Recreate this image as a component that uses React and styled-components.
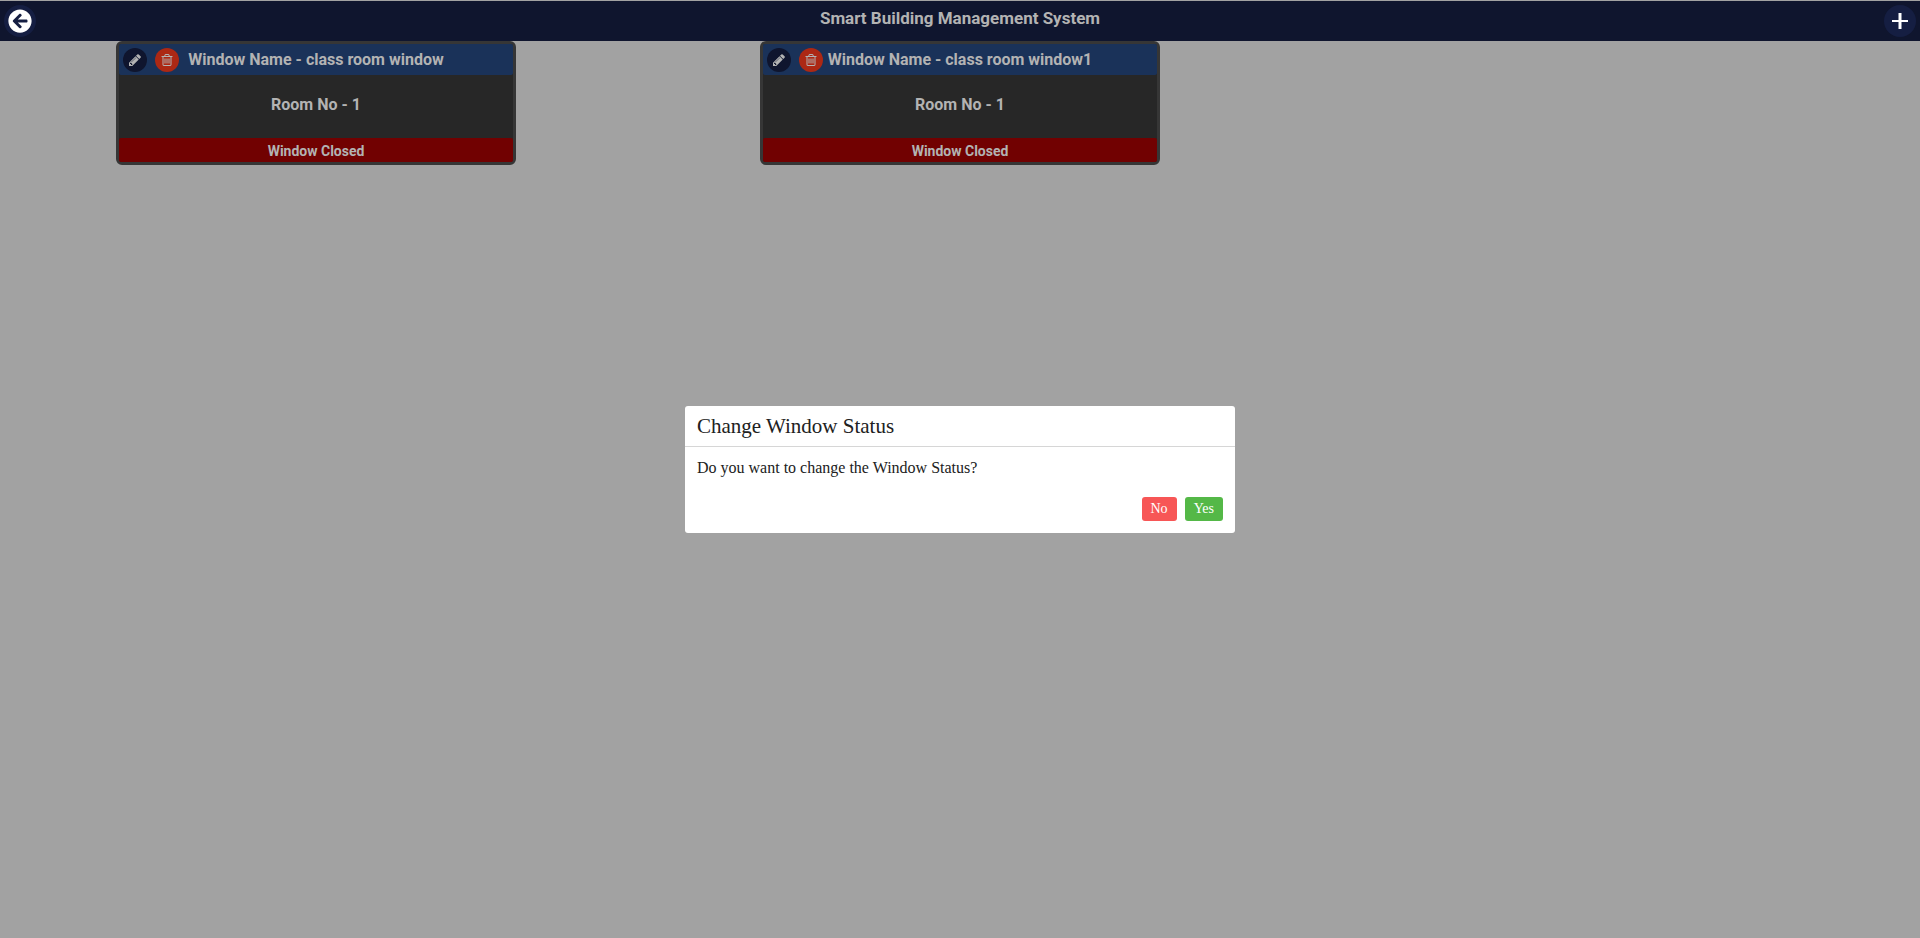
import React from "react";
import styled, { createGlobalStyle } from "styled-components";
import { FaArrowCircleLeft } from "react-icons/fa";

const GlobalStyle = createGlobalStyle`
  * { box-sizing: border-box; }
  body {
    margin: 0;
    background: #a2a2a2;
    font-family: "Liberation Serif", "Times New Roman", serif;
    color: #212121;
    overflow-x: hidden;
  }
  h1, h2, p { margin: 0; }
`;

const sans = `Roboto, "Liberation Sans", Arial, sans-serif`;

const Page = styled.div`
  min-height: 100vh;
  overflow: hidden;
`;

const TopBar = styled.header`
  display: flex;
  align-items: center;
  justify-content: space-between;
  height: 41px;
  padding: 0 4px;
  border-top: 1px solid #a2a2a2;
  background: #0f152e;
`;

const AppTitle = styled.h1`
  padding-bottom: 6px;
  font: bold 17px/24px ${sans};
  color: #b3b3b3;
`;

const RoundButton = styled.button`
  display: flex;
  align-items: center;
  justify-content: center;
  width: ${(p) => p.$size}px;
  height: ${(p) => p.$size}px;
  padding: 0;
  border: 0;
  border-radius: 50%;
  background: ${(p) => p.$bg};
  color: ${(p) => p.$fg};
  cursor: pointer;
`;

const CardGrid = styled.main`
  display: grid;
  grid-template-columns: repeat(3, 1fr);
  justify-items: center;
  margin: 0 -6px;
`;

const Card = styled.article`
  width: 400px;
  border: 3px solid #363636;
  border-radius: 6px;
  background: #272727;
  color: #b3b3b3;
  font-family: ${sans};
  font-weight: bold;
  text-align: center;
`;

const CardHeader = styled.div`
  display: grid;
  align-items: center;
  height: 31px;
  padding: 0 4px;
  border-radius: 2px;
  background: #1a3259;

  > * {
    grid-area: 1 / 1;
  }
`;

const CardActions = styled.div`
  display: flex;
  gap: 8px;
`;

const CardTitle = styled.h2`
  font-size: 16px;
  line-height: 24px;
`;

const RoomLabel = styled.p`
  padding: 18px 0 21px;
  font-size: 16px;
  line-height: 24px;
`;

const StatusBar = styled.button`
  display: block;
  width: 100%;
  height: 24px;
  padding: 1px 0 0;
  border: 0;
  border-radius: 2px;
  background: #710101;
  color: inherit;
  font: bold 14px/22px ${sans};
  cursor: pointer;
`;

const Overlay = styled.div`
  position: fixed;
  inset: 0;
  display: flex;
  align-items: center;
  justify-content: center;
`;

const Dialog = styled.section`
  width: 550px;
  border-radius: 3px;
  background: #fff;
`;

const DialogTitle = styled.h2`
  padding: 8px 12px;
  border-bottom: 1px solid #d6d6d6;
  font-weight: normal;
  font-size: 21px;
  line-height: 24px;
`;

const DialogText = styled.p`
  padding: 12px 12px 0;
  font-size: 16px;
  line-height: 18px;
`;

const DialogActions = styled.div`
  display: flex;
  justify-content: flex-end;
  gap: 8px;
  padding: 20px 12px 12px;
`;

const DialogButton = styled.button`
  height: 24px;
  padding: 0 9px;
  border: 0;
  border-radius: 3px;
  background: ${(p) => p.$bg};
  color: #fff;
  font: 500 14px/20px "Liberation Serif", serif;
  cursor: pointer;
`;

const windows = [
  { name: "class room window", room: 1 },
  { name: "class room window1", room: 1 },
];

function PencilIcon() {
  return (
    <svg width="14" height="14" viewBox="0 0 1792 1792" fill="currentColor">
      <path d="M491 1536l91-91-235-235-91 91v107h128v128h107zm523-928q0-22-22-22-10 0-17 7l-542 542q-7 7-7 17 0 22 22 22 10 0 17-7l542-542q7-7 7-17zm-54-192l416 416-832 832h-416v-416zm683 96q0 53-37 90l-166 166-416-416 166-165q36-38 90-38 53 0 91 38l235 234q37 39 37 91z" />
    </svg>
  );
}

function TrashIcon() {
  return (
    <svg width="14" height="14" viewBox="0 0 1792 1792" fill="currentColor">
      <path d="M704 736v576q0 14-9 23t-23 9h-64q-14 0-23-9t-9-23v-576q0-14 9-23t23-9h64q14 0 23 9t9 23zm256 0v576q0 14-9 23t-23 9h-64q-14 0-23-9t-9-23v-576q0-14 9-23t23-9h64q14 0 23 9t9 23zm256 0v576q0 14-9 23t-23 9h-64q-14 0-23-9t-9-23v-576q0-14 9-23t23-9h64q14 0 23 9t9 23zm128 724v-948h-896v948q0 22 7 40.5t14.5 27 10.5 8.5h832q3 0 10.5-8.5t14.5-27 7-40.5zm-672-1076h448l-48-117q-7-9-17-11h-317q-10 2-17 11zm928 32v64q0 14-9 23t-23 9h-96v948q0 83-47 143.5t-113 60.5h-832q-66 0-113-58.5t-47-141.5v-952h-96q-14 0-23-9t-9-23v-64q0-14 9-23t23-9h309l70-167q15-37 54-63t79-26h320q40 0 79 26t54 63l70 167h309q14 0 23 9t9 23z" />
    </svg>
  );
}

function WindowCard({ name, room }) {
  return (
    <Card>
      <CardHeader>
        <CardTitle>Window Name - {name}</CardTitle>
        <CardActions>
          <RoundButton $size={24} $bg="#0f152e" $fg="#b3b3b3" aria-label="Edit window">
            <PencilIcon />
          </RoundButton>
          <RoundButton $size={24} $bg="#ac2814" $fg="#b3b3b3" aria-label="Delete window">
            <TrashIcon />
          </RoundButton>
        </CardActions>
      </CardHeader>
      <RoomLabel>Room No - {room}</RoomLabel>
      <StatusBar>Window Closed</StatusBar>
    </Card>
  );
}

export default function App() {
  return (
    <Page>
      <GlobalStyle />
      <TopBar>
        <RoundButton $size={32} $bg="#151e42" $fg="#fff" aria-label="Back">
          <FaArrowCircleLeft size={24} />
        </RoundButton>
        <AppTitle>Smart Building Management System</AppTitle>
        <RoundButton $size={32} $bg="#151e42" $fg="#fff" aria-label="Add window">
          <svg width="18" height="18" viewBox="0 0 18 18" fill="none" stroke="currentColor">
            <path d="M9 1v16" strokeWidth="3" />
            <path d="M1 9h16" strokeWidth="2" />
          </svg>
        </RoundButton>
      </TopBar>
      <CardGrid>
        {windows.map((w) => (
          <WindowCard key={w.name} {...w} />
        ))}
      </CardGrid>
      <Overlay>
        <Dialog role="dialog" aria-modal="true" aria-labelledby="dialog-title">
          <DialogTitle id="dialog-title">Change Window Status</DialogTitle>
          <DialogText>Do you want to change the Window Status?</DialogText>
          <DialogActions>
            <DialogButton $bg="#f75656">No</DialogButton>
            <DialogButton $bg="#54b847">Yes</DialogButton>
          </DialogActions>
        </Dialog>
      </Overlay>
    </Page>
  );
}
